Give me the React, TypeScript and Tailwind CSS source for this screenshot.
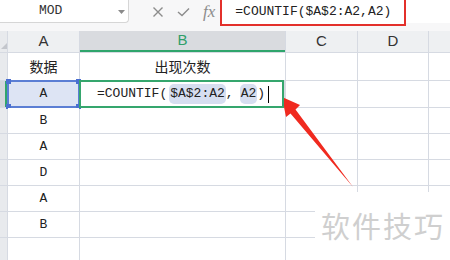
import React from 'react';

const mono = { fontFamily: '"Liberation Mono", "Noto Sans CJK SC", monospace' };
const cjk = { fontFamily: '"Noto Sans CJK SC", "Liberation Sans", sans-serif' };

const colWidths = 'grid-cols-[7px_71px_205px_71px_70px_1fr]';
const rowHeights = 'grid-rows-[21px_27px_26px_25px_25px_25px_25px_25px_25px]';

const data = ['A', 'B', 'A', 'D', 'A', 'B', ''];

const Handle: React.FC<{ pos: string }> = ({ pos }) => (
  <span className={`absolute w-[5px] h-[5px] bg-[#4a6fd0] ${pos}`} />
);

const FormulaInCell: React.FC = () => (
  <div className="flex items-center h-full pl-[17px] text-[13px] text-[#222]" style={mono}>
    <span>=COUNTIF(</span>
    <span className="ml-[2px] bg-[#d6def0] rounded-[5px] px-[1px]">$A$2:A2</span>
    <span>,</span>
    <span className="ml-[6px] bg-[#d6def0] rounded-[5px] px-[1px]">A2</span>
    <span>)</span>
    <span className="ml-[3px] w-px h-[17px] bg-black" />
  </div>
);

const App: React.FC = () => {
  return (
    <div className="relative w-[450px] h-[260px] overflow-hidden bg-white" style={cjk}>
      {/* top bar */}
      <div className="h-[31px] flex items-start bg-[#f7f7f8]">
        <div className="w-[129px] h-[23px] bg-white border border-[#d6d6d6] border-t-0 border-l-0 rounded-br-[4px] flex items-center relative">
          <span className="ml-[39px] text-[13px] text-[#333]" style={mono}>MOD</span>
          <svg className="absolute right-[3px] top-[10px]" width="7" height="4" viewBox="0 0 7 4">
            <path d="M0 0 L7 0 L3.5 4 Z" fill="#8a8a8a" />
          </svg>
        </div>
        <div className="flex items-center h-[23px] ml-[23px] gap-[13px] text-[#8c8c8c]">
          <svg width="12" height="12" viewBox="0 0 12 12">
            <path d="M1.5 1.5 L10.5 10.5 M10.5 1.5 L1.5 10.5" stroke="#8c8c8c" strokeWidth="1.4" />
          </svg>
          <svg width="13" height="10" viewBox="0 0 13 10">
            <path d="M1 5 L5 8.5 L12 1.5" stroke="#8c8c8c" strokeWidth="1.4" fill="none" />
          </svg>
          <span className="italic text-[17px] leading-none" style={{ fontFamily: '"Liberation Serif", serif' }}>fx</span>
        </div>
        <div className="ml-[5px] -mt-[2px] w-[186px] h-[28px] bg-white border-2 border-[#e3302b] flex items-center pl-[13px]">
          <span className="text-[13px] text-[#222]" style={mono}>=COUNTIF($A$2:A2,A2)</span>
        </div>
        <div className="flex-1 h-[23px] bg-white" />
      </div>

      {/* sheet grid */}
      <div className={`grid ${colWidths} ${rowHeights} gap-px bg-[#d6dae2]`}>
        {/* column headers */}
        <div className="bg-[#e8eaed] relative">
          <svg className="absolute right-0 bottom-[3px]" width="6" height="6" viewBox="0 0 6 6">
            <path d="M6 0 L6 6 L0 6 Z" fill="#c3c6cc" />
          </svg>
        </div>
        <div className="bg-[#eef0f2] flex items-center justify-center text-[15px] text-[#333]" style={{ fontFamily: '"Liberation Sans", sans-serif' }}>A</div>
        <div className="bg-[#d9dbdf] flex items-center justify-center text-[15px] text-[#2f9f6a] border-b-2 border-[#2fa56c]" style={{ fontFamily: '"Liberation Sans", sans-serif' }}>B</div>
        <div className="bg-[#eef0f2] flex items-center justify-center text-[15px] text-[#333]" style={{ fontFamily: '"Liberation Sans", sans-serif' }}>C</div>
        <div className="bg-[#eef0f2] flex items-center justify-center text-[15px] text-[#333]" style={{ fontFamily: '"Liberation Sans", sans-serif' }}>D</div>
        <div className="bg-[#eef0f2]" />

        {/* row 1 */}
        <div className="bg-[#e8eaed]" />
        <div className="bg-white flex items-center justify-center text-[14px] text-[#222]">数据</div>
        <div className="bg-white flex items-center justify-center text-[14px] text-[#222]">出现次数</div>
        <div className="bg-white" />
        <div className="bg-white" />
        <div className="bg-white" />

        {data.map((v, i) => (
          <React.Fragment key={i}>
            <div className={i === 0 ? 'bg-[#d3d6db] border-r-2 border-[#2fa56c]' : 'bg-[#e8eaed]'} />
            <div
              className={`relative flex items-center justify-center text-[13px] text-[#222] ${
                i === 0 ? 'bg-[#dde4f4] outline-2 outline-[#5b7ed4] -outline-offset-1' : 'bg-white'
              }`}
              style={mono}
            >
              {v}
              {i === 0 && (
                <>
                  <Handle pos="-left-[2px] -top-[2px]" />
                  <Handle pos="-right-[2px] -top-[2px]" />
                  <Handle pos="-left-[2px] -bottom-[2px]" />
                  <Handle pos="-right-[2px] -bottom-[2px]" />
                </>
              )}
            </div>
            <div
              className={
                i === 0 ? 'bg-white outline-2 outline-[#35a66d] -outline-offset-1 mr-[2px] relative z-10' : 'bg-white'
              }
            >
              {i === 0 && <FormulaInCell />}
            </div>
            <div className="bg-white" />
            <div className="bg-white" />
            <div className="bg-white" />
          </React.Fragment>
        ))}
      </div>

      {/* watermark */}
      <div className="absolute left-[315px] top-[192px] w-[135px] h-[68px] bg-white flex items-center pl-[6px]">
        <span className="text-[29px] text-[#cfcfcf] tracking-[2px]" style={cjk}>软件技巧</span>
      </div>

      {/* red arrow */}
      <svg className="absolute left-0 top-0 pointer-events-none" width="450" height="260" viewBox="0 0 450 260">
        <polygon
          points="282,97 300,105 295.5,109.5 353,187 290.5,113.5 286,117"
          fill="#f02a1f"
        />
      </svg>
    </div>
  );
};

export default App;
